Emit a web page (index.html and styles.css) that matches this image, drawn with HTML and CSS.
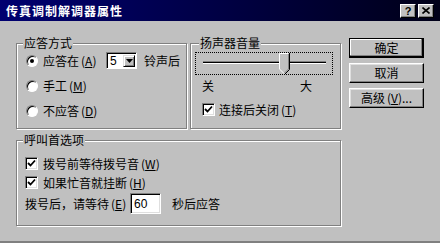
FILE: index.html
```html
<!DOCTYPE html>
<html lang="zh-CN">
<head>
<meta charset="UTF-8">
<title>传真调制解调器属性</title>
<link rel="stylesheet" href="styles.css">
</head>
<body>

<div class="window">
    <div class="titlebar">
        <span class="title">传真调制解调器属性</span>
        <div class="title-buttons">
            <span class="tbtn help">?</span>
            <span class="tbtn close">
                <svg width="8" height="7" viewBox="0 0 8 7"><path d="M0.5 0.5 L7.5 6.5 M7.5 0.5 L0.5 6.5" stroke="#000" stroke-width="1.6" fill="none"/></svg>
            </span>
        </div>
    </div>

    <div class="content">
        <div class="main">
            <div class="top-row">
                <!-- answer mode -->
                <div class="group answer">
                    <span class="legend">应答方式</span>
                    <div class="row">
                        <span class="radio checked"></span>
                        <span class="label wide">应答在<span class="key">(<u>A</u>)</span></span>
                        <div class="select">
                            <span class="value">5</span>
                            <span class="arrow"><svg width="7" height="4" viewBox="0 0 7 4"><polygon points="0,0 7,0 3.5,4" fill="#000"/></svg></span>
                        </div>
                        <span class="after">铃声后</span>
                    </div>
                    <div class="row">
                        <span class="radio"></span>
                        <span class="label">手工<span class="key">(<u>M</u>)</span></span>
                    </div>
                    <div class="row">
                        <span class="radio"></span>
                        <span class="label">不应答<span class="key">(<u>D</u>)</span></span>
                    </div>
                </div>

                <!-- speaker volume -->
                <div class="group volume">
                    <span class="legend">扬声器音量</span>
                    <div class="slider">
                        <svg width="136" height="21" viewBox="0 0 136 21">
                            <rect x="7" y="8" width="123" height="1" fill="#808080"/>
                            <rect x="7" y="9" width="123" height="1" fill="#000"/>
                            <rect x="7" y="10" width="123" height="1" fill="#fff"/>
                            <polygon points="83,0 93,0 93,16 88,21 83,16" fill="#c0c0c0"/>
                            <polyline points="83.5,16 83.5,0.5 92.5,0.5" stroke="#fff" fill="none"/>
                            <polyline points="83.5,16 88,20.5" stroke="#fff" fill="none"/>
                            <polyline points="93.5,0 93.5,16.5 88.5,21.5" stroke="#000" fill="none"/>
                            <polyline points="92.5,1 92.5,16 88.5,20" stroke="#808080" fill="none"/>
                        </svg>
                    </div>
                    <div class="scale">
                        <span>关</span>
                        <span>大</span>
                    </div>
                    <div class="row check-row">
                        <span class="check"><svg width="9" height="9" viewBox="0 0 9 9"><path d="M1 4 L3.5 6.5 L8 1.5" stroke="#000" stroke-width="1.8" fill="none"/></svg></span>
                        <span class="label">连接后关闭<span class="key">(<u>T</u>)</span></span>
                    </div>
                </div>
            </div>

            <!-- dialing preferences -->
            <div class="group dialing">
                <span class="legend">呼叫首选项</span>
                <div class="row check-row">
                    <span class="check"><svg width="9" height="9" viewBox="0 0 9 9"><path d="M1 4 L3.5 6.5 L8 1.5" stroke="#000" stroke-width="1.8" fill="none"/></svg></span>
                    <span class="label">拨号前等待拨号音<span class="key">(<u>W</u>)</span></span>
                </div>
                <div class="row check-row">
                    <span class="check"><svg width="9" height="9" viewBox="0 0 9 9"><path d="M1 4 L3.5 6.5 L8 1.5" stroke="#000" stroke-width="1.8" fill="none"/></svg></span>
                    <span class="label">如果忙音就挂断<span class="key">(<u>H</u>)</span></span>
                </div>
                <div class="row wait-row">
                    <span class="label wait">拨号后，请等待<span class="key">(<u>E</u>)</span></span>
                    <span class="textbox">60</span>
                    <span class="after">秒后应答</span>
                </div>
            </div>
        </div>

        <div class="buttons">
            <button class="btn default">确定</button>
            <button class="btn">取消</button>
            <button class="btn">高级<span class="key">(<u>V</u>)...</span></button>
        </div>
    </div>
</div>

</body>
</html>
```

FILE: styles.css
```css
body {
    margin: 0;
    padding: 0;
    font-family: "Noto Sans CJK SC", "Noto Sans", sans-serif;
    font-size: 12px;
    color: #000;
    background-color: #c0c0c0;
}

.window {
    width: 440px;
    height: 241px;
    background-color: #c0c0c0;
    border-bottom: 2px solid #808080;
}

/* title bar */
.titlebar {
    height: 21px;
    display: flex;
    align-items: center;
    justify-content: space-between;
    padding: 0 6px;
    background: linear-gradient(to right, #000070, #000018);
}

.title {
    color: #fff;
    font-weight: bold;
    letter-spacing: 1px;
    line-height: 14px;
}

.title-buttons {
    display: flex;
    gap: 2px;
}

.tbtn {
    width: 16px;
    height: 14px;
    box-sizing: border-box;
    display: flex;
    align-items: center;
    justify-content: center;
    background-color: #c0c0c0;
    border: 1px solid;
    border-color: #fff #000 #000 #fff;
    box-shadow: inset -1px -1px #808080;
}

.tbtn.help {
    font: bold 11px/12px "Liberation Sans", sans-serif;
}

/* dialog body */
.content {
    display: flex;
    padding: 17px 0 0 16px;
}

.main {
    width: 326px;
    margin-top: 5px;
    display: flex;
    flex-direction: column;
    gap: 11px;
}

.top-row {
    display: flex;
    gap: 3px;
}

.group {
    position: relative;
    box-sizing: border-box;
    height: 86px;
    border: 1px solid #808080;
    box-shadow: inset 1px 1px #fff, 1px 1px #fff;
}

.legend {
    position: absolute;
    top: -8px;
    left: 6px;
    padding: 0 1px;
    line-height: 14px;
    background-color: #c0c0c0;
}

.answer {
    width: 171px;
    padding: 4px 0 0 9px;
}

.volume {
    width: 151px;
    padding: 8px 0 0 4px;
}

.volume .legend {
    left: 8px;
}

.dialing {
    width: 325px;
    padding: 13px 0 0 8px;
}

.row {
    display: flex;
    align-items: center;
    height: 25px;
    line-height: 14px;
    white-space: nowrap;
}

.check-row {
    height: 19px;
}

.wait-row {
    height: 23px;
}

.key {
    margin-left: 2px;
}

.radio {
    position: relative;
    width: 12px;
    height: 12px;
    box-sizing: border-box;
    margin-right: 5px;
    border-radius: 50%;
    background-color: #fff;
    border: 1px solid;
    border-color: #808080 #fff #fff #808080;
    box-shadow: inset 1px 1px #000;
}

.radio.checked::after {
    content: "";
    position: absolute;
    left: 3px;
    top: 3px;
    width: 4px;
    height: 4px;
    border-radius: 50%;
    background-color: #000;
}

.label.wide {
    width: 63px;
}

.label.wait {
    width: 105px;
}

.select {
    width: 31px;
    height: 17px;
    box-sizing: border-box;
    display: flex;
    padding: 2px 1px 1px 2px;
    background-color: #fff;
    border: 1px solid;
    border-color: #808080 #fff #fff #808080;
    box-shadow: inset 1px 1px #000;
}

.select .value {
    flex: 1;
    padding-left: 1px;
    line-height: 12px;
    font-family: "Liberation Sans", sans-serif;
}

.select .arrow {
    width: 12px;
    box-sizing: border-box;
    display: flex;
    align-items: center;
    justify-content: center;
    background-color: #c0c0c0;
    border: 1px solid;
    border-color: #dfdfdf #000 #000 #dfdfdf;
    box-shadow: inset 1px 1px #fff, inset -1px -1px #808080;
}

.after {
    margin-left: 7px;
}

.wait-row .after {
    margin-left: 11px;
}

.textbox {
    width: 31px;
    height: 21px;
    box-sizing: border-box;
    padding: 3px 0 0 3px;
    line-height: 14px;
    font-family: "Liberation Sans", sans-serif;
    background-color: #fff;
    border: 1px solid;
    border-color: #808080 #fff #fff #808080;
    box-shadow: inset 1px 1px #000, inset -1px -1px #dfdfdf;
}

.check {
    width: 13px;
    height: 13px;
    box-sizing: border-box;
    margin-right: 5px;
    display: flex;
    align-items: center;
    justify-content: center;
    background-color: #fff;
    border: 1px solid;
    border-color: #808080 #fff #fff #808080;
    box-shadow: inset 1px 1px #000, inset -1px -1px #dfdfdf;
}

/* speaker slider */
.slider {
    width: 138px;
    height: 23px;
    box-sizing: border-box;
    border: 1px dotted #000;
}

.slider svg {
    display: block;
}

.scale {
    display: flex;
    justify-content: space-between;
    width: 110px;
    margin: 4px 0 0 7px;
    line-height: 14px;
}

.volume .check-row {
    margin: 7px 0 0 7px;
}

.volume .check {
    margin-right: 4px;
}

/* buttons on the right */
.buttons {
    display: flex;
    flex-direction: column;
    gap: 5px;
    margin-left: 7px;
}

.btn {
    width: 75px;
    height: 20px;
    box-sizing: border-box;
    padding: 0;
    font: inherit;
    line-height: 14px;
    color: #000;
    background-color: #c0c0c0;
    border: 1px solid;
    border-color: #fff #000 #000 #fff;
    box-shadow: inset -1px -1px #808080, inset 1px 1px #dfdfdf;
}

.btn.default {
    border-color: #000;
    box-shadow: inset -1px -1px #000, inset -2px -2px #808080, inset 1px 1px #fff;
}
```
